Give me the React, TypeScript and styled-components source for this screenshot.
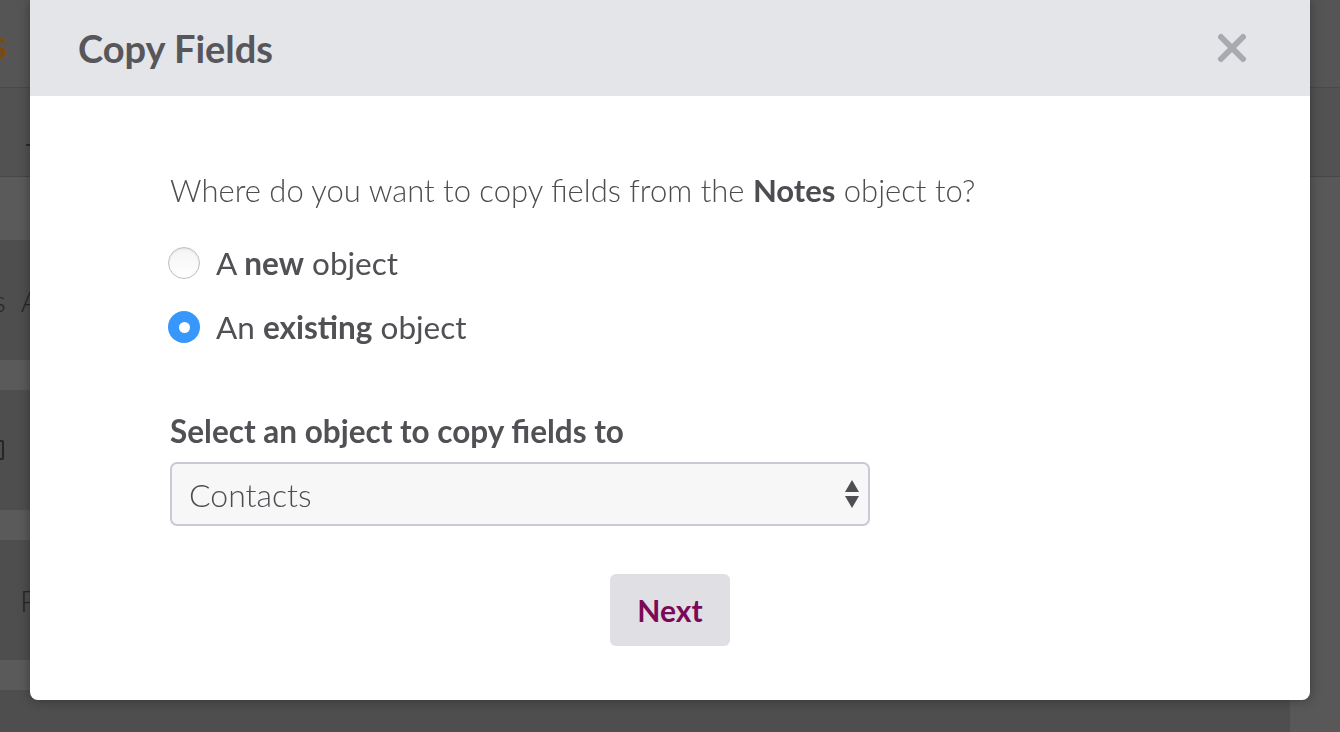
import React from "react";
import styled, { createGlobalStyle } from "styled-components";

const Global = createGlobalStyle`
  html, body { margin: 0; padding: 0; }
  body {
    width: 1340px;
    height: 732px;
    overflow: hidden;
    font-family: Lato, "Open Sans", "Liberation Sans", sans-serif;
    background: #555555;
  }
  * { box-sizing: border-box; }
`;

/* ---------- dimmed page behind the modal ---------- */

const Page = styled.div`
  width: 1340px;
  height: 732px;
  display: flex;
  flex-direction: column;
  background: #555555;
  overflow: hidden;
`;

const TopBar = styled.div`
  height: 88px;
  flex: none;
  display: flex;
  align-items: center;
  background: #555555;
  border-bottom: 1px solid #494949;
`;

const Logo = styled.span`
  margin-left: -10px;
  font-size: 40px;
  font-weight: 700;
  color: #7b4a0c;
  line-height: 1;
`;

const Toolbar = styled.div`
  height: 89px;
  flex: none;
  display: flex;
  align-items: flex-end;
  padding: 0 0 30px 26px;
  background: #525252;
  border-bottom: 1px solid #474747;
`;

const ToolDash = styled.span`
  width: 5px;
  height: 2px;
  background: #2b2b2b;
`;

const Content = styled.div`
  flex: 1;
  display: flex;
`;

const List = styled.div`
  flex: 1;
  display: flex;
  flex-direction: column;
  gap: 30px;
  padding-top: 63px;
  background: #5a5a5a;
`;

const Row = styled.div`
  height: 120px;
  flex: none;
  display: flex;
  align-items: center;
  gap: 15px;
  background: #4e4e4e;
  color: #262626;
  font-weight: 300;
  font-size: 30px;
`;

const RowText = styled.span<{ $shift?: number }>`
  margin-left: ${(p) => p.$shift ?? 0}px;
  line-height: 1;
`;

const RowBox = styled.span`
  margin-left: -10px;
  width: 14px;
  height: 20px;
  border: 2px solid #262626;
  border-radius: 2px;
`;

const SideColumn = styled.div`
  width: 50px;
  flex: none;
  background: #585858;
`;

/* ---------- modal ---------- */

const Overlay = styled.div`
  position: fixed;
  inset: 0;
  display: flex;
  justify-content: center;
  align-items: flex-start;
`;

const Modal = styled.div`
  width: 1280px;
  height: 700px;
  display: flex;
  flex-direction: column;
  background: #ffffff;
  border-radius: 0 0 8px 8px;
  box-shadow: 0 0 12px rgba(0, 0, 0, 0.35);
  overflow: hidden;
`;

const Header = styled.div`
  height: 96px;
  flex: none;
  display: flex;
  align-items: center;
  justify-content: space-between;
  padding: 0 62px 0 48px;
  background: #e4e5e9;
`;

const Title = styled.h1`
  margin: 0;
  font-size: 38px;
  font-weight: 700;
  color: #56565b;
  letter-spacing: 0;
`;

const CloseButton = styled.button`
  width: 32px;
  height: 32px;
  padding: 0;
  border: none;
  background: none;
  display: flex;
  align-items: center;
  justify-content: center;
  cursor: pointer;
`;

const Body = styled.div`
  flex: 1;
  display: flex;
  flex-direction: column;
  padding: 74px 140px 0 140px;
  color: #505055;
`;

const Question = styled.p`
  margin: 0;
  font-size: 31px;
  line-height: 40px;
  font-weight: 300;
  color: #4c4c51;
  b { font-weight: 700; }
`;

const RadioList = styled.div`
  margin-top: 33px;
  display: flex;
  flex-direction: column;
  gap: 24px;
`;

const RadioRow = styled.label`
  height: 40px;
  display: flex;
  align-items: center;
  gap: 16px;
  margin-left: -2px;
  font-size: 31.5px;
  font-weight: 400;
  color: #505055;
  cursor: pointer;
  b { font-weight: 700; }
`;

const RadioDot = styled.span<{ $checked?: boolean }>`
  width: 32px;
  height: 32px;
  flex: none;
  border-radius: 50%;
  display: flex;
  align-items: center;
  justify-content: center;
  background: ${(p) =>
    p.$checked ? "#3797fb" : "linear-gradient(#f4f4f4, #ffffff)"};
  border: ${(p) => (p.$checked ? "none" : "1px solid #bfbfc2")};
  box-shadow: ${(p) => (p.$checked ? "none" : "inset 0 1px 2px rgba(0,0,0,0.08)")};
  &::after {
    content: "";
    display: ${(p) => (p.$checked ? "block" : "none")};
    width: 11px;
    height: 11px;
    border-radius: 50%;
    background: #ffffff;
  }
`;

const FieldLabel = styled.div`
  margin-top: 64px;
  font-size: 31.5px;
  line-height: 40px;
  font-weight: 700;
  color: #505055;
`;

const SelectBox = styled.div`
  margin-top: 11px;
  width: 700px;
  height: 64px;
  display: flex;
  align-items: center;
  justify-content: space-between;
  padding: 0 8px 0 17px;
  background: #f7f7f8;
  border: 2px solid #cbc9d5;
  border-radius: 7px;
  font-size: 32px;
  font-weight: 300;
  color: #4c4c51;
`;

const NextButton = styled.button`
  margin: 48px auto 0 auto;
  width: 120px;
  height: 72px;
  border: none;
  border-radius: 6px;
  background: #e0dfe4;
  font-family: inherit;
  font-size: 30px;
  font-weight: 700;
  color: #7a0a57;
  cursor: pointer;
`;

const CloseIcon = () => (
  <svg width="30" height="30" viewBox="0 0 30 30">
    <path
      d="M4 4 L26 26 M26 4 L4 26"
      stroke="#a9aab0"
      strokeWidth="6"
      strokeLinecap="round"
    />
  </svg>
);

const SelectArrows = () => (
  <svg width="16" height="30" viewBox="0 0 16 30">
    <path d="M8 1 L15 13 L1 13 Z" fill="#4e4e53" />
    <path d="M1 17 L15 17 L8 29 Z" fill="#4e4e53" />
  </svg>
);

export default function App() {
  return (
    <>
      <Global />
      <Page>
        <TopBar>
          <Logo>s</Logo>
        </TopBar>
        <Toolbar>
          <ToolDash />
        </Toolbar>
        <Content>
          <List>
            <Row>
              <RowText $shift={-7}>s</RowText>
              <RowText>Archive</RowText>
            </Row>
            <Row>
              <RowBox />
              <RowText $shift={15}>Deals</RowText>
            </Row>
            <Row>
              <RowText $shift={20}>People</RowText>
            </Row>
            <Row />
          </List>
          <SideColumn />
        </Content>
      </Page>
      <Overlay>
        <Modal>
          <Header>
            <Title>Copy Fields</Title>
            <CloseButton aria-label="Close">
              <CloseIcon />
            </CloseButton>
          </Header>
          <Body>
            <Question>
              Where do you want to copy fields from the <b>Notes</b> object to?
            </Question>
            <RadioList>
              <RadioRow>
                <RadioDot />
                <span>
                  A <b>new</b> object
                </span>
              </RadioRow>
              <RadioRow>
                <RadioDot $checked />
                <span>
                  An <b>existing</b> object
                </span>
              </RadioRow>
            </RadioList>
            <FieldLabel>Select an object to copy fields to</FieldLabel>
            <SelectBox>
              <span>Contacts</span>
              <SelectArrows />
            </SelectBox>
            <NextButton>Next</NextButton>
          </Body>
        </Modal>
      </Overlay>
    </>
  );
}
